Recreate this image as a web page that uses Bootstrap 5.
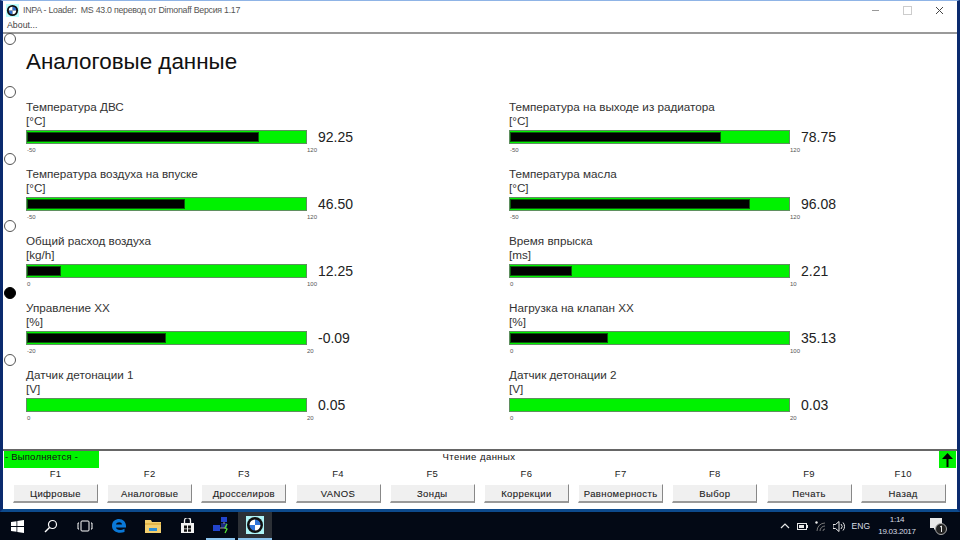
<!DOCTYPE html>
<html lang="ru">
<head>
<meta charset="utf-8">
<title>INPA</title>
<link href="https://cdn.jsdelivr.net/npm/bootstrap@5.3.0/dist/css/bootstrap.min.css" rel="stylesheet">
<style>
html,body{height:540px;overflow:hidden;background:#000}
body{font-family:"Liberation Sans",Arial,sans-serif;color:#222}
.app-win{height:512px;background:#fff;border-top:1px solid #8fb4e6;border-left:3px solid #0a2a6e;border-right:3px solid #0a2a6e;border-bottom:3px solid #0d4a8c;position:relative}
.app-title{height:19px;font-size:8.8px;letter-spacing:-.26px;color:#555;padding-left:3px;gap:4px}
.app-menu{height:12px;font-size:8.8px;color:#444;padding-left:4px;line-height:10px}
.win-ctl{margin-left:auto;gap:23px;padding-right:13px}
.main-pane{border-top:2px solid #9a9a9a;height:419px;padding:15px 0 0 23px;border-bottom:2px solid #666}
.page-head{font-size:22.4px;line-height:26px;color:#111;margin:0 0 25px 0;font-weight:400}
.meter-grid{display:grid;grid-template-columns:483px 340px}
.meter-item{height:67px;font-size:11.7px;line-height:14px;color:#333}
.meter-line{gap:11px;align-items:center;margin-top:1px}
.meter-track{width:281px;height:14px;background:#00f200;border:1px solid #5f8f5f;padding:1px 0}
.meter-fill{height:100%;background:#000;outline:1px solid #0a5a0a;outline-offset:-1px}
.meter-val{font-size:14px;line-height:16px;color:#222}
.meter-scale{width:291px;font-size:6px;line-height:8px;color:#555;margin-top:1px;padding-left:1px}
.scale-end{width:10px;text-align:left}
.radio-dot{position:absolute;left:1px;width:12px;height:12px;border-radius:50%;border:1px solid #555;background:#fff}
.radio-dot.on{background:#000;border-color:#000}
.status-bar{height:17px;font-size:9.5px;letter-spacing:.45px;color:#111}
.status-run{width:95px;background:#00f200;padding-left:1px;line-height:12px;margin-left:1px;letter-spacing:.2px}
.status-mid{flex:1;text-align:center;line-height:12px;padding-right:80px;letter-spacing:.45px}
.status-arrow{width:17px;background:#00f200;margin-right:1px;line-height:0}
.fkey-row{padding-left:10px;gap:9.2px}
.fkey-cell{width:85px;text-align:center}
.fkey-cap{font-size:9.5px;line-height:12px;margin:0 0 4px;color:#222;letter-spacing:.3px}
.fkey-btn{width:85px;height:19px;padding:0;font-size:9.5px;letter-spacing:.4px;line-height:15px;color:#222;-webkit-text-stroke:.1px #222;background:#f0f0f0;border:0;border-radius:0;border-right:1px solid #888;border-bottom:2px solid #999;border-top:1px solid #fff;border-left:1px solid #fff;display:block}
.task-bar{height:28px;background:#030915;position:relative;color:#d8dde4}
.task-left{height:28px}
.task-slot{height:28px;display:flex;align-items:center;justify-content:center;flex:none}
.slot-a{width:34px}
.slot-on{background:#2c3036;border-bottom:2px solid #8cc4ee}
.slot-open{border-bottom:2px solid #8cc4ee;width:29px;margin:0 3px 0 2px}
.tray-zone{position:absolute;right:12px;top:0;height:28px;gap:7px}
.tray-eng{font-size:8.5px}
.tray-clock{font-size:8px;letter-spacing:-.25px;line-height:12px;text-align:center;width:38px;margin-left:1px;margin-right:7px}
</style>
</head>
<body>
<div class="app-win d-flex flex-column">
  <div class="app-title d-flex align-items-center">
    <svg width="13" height="13" viewBox="0 0 14 14"><rect x="0" y="0" width="14" height="14" fill="#bff"/><circle cx="7" cy="7" r="6" fill="#111"/><path d="M7 3a4 4 0 0 1 4 4H7zM7 11a4 4 0 0 1-4-4h4z" fill="#2f6fd0"/><path d="M7 3a4 4 0 0 0-4 4h4zM7 11a4 4 0 0 0 4-4H7z" fill="#fff"/></svg>
    <span>INPA - Loader:&nbsp; MS 43.0 перевод от Dimonaff Версия 1.17</span>
    <div class="win-ctl d-flex align-items-center">
      <svg width="9" height="9" viewBox="0 0 9 9"><path d="M1 4.500h7" stroke="#999" stroke-width="1"/></svg>
      <svg width="9" height="9" viewBox="0 0 9 9"><rect x=".5" y=".5" width="8" height="8" fill="none" stroke="#ccc"/></svg>
      <svg width="9" height="9" viewBox="0 0 9 9"><path d="M1 1l7 7M8 1L1 8" stroke="#444" stroke-width="1"/></svg>
    </div>
  </div>
  <div class="app-menu">About...</div>
  <div class="main-pane">
    <h1 class="page-head">Аналоговые данные</h1>
    <div class="meter-grid">
      <div class="meter-item"><div>Температура ДВС</div><div>[°C]</div><div class="meter-line d-flex"><div class="meter-track"><div class="meter-fill" style="width:83.3%"></div></div><div class="meter-val">92.25</div></div><div class="meter-scale d-flex justify-content-between"><span>-50</span><span class="scale-end">120</span></div></div>
      <div class="meter-item"><div>Температура на выходе из радиатора</div><div>[°C]</div><div class="meter-line d-flex"><div class="meter-track"><div class="meter-fill" style="width:75.6%"></div></div><div class="meter-val">78.75</div></div><div class="meter-scale d-flex justify-content-between"><span>-50</span><span class="scale-end">120</span></div></div>
      <div class="meter-item"><div>Температура воздуха на впуске</div><div>[°C]</div><div class="meter-line d-flex"><div class="meter-track"><div class="meter-fill" style="width:56.6%"></div></div><div class="meter-val">46.50</div></div><div class="meter-scale d-flex justify-content-between"><span>-50</span><span class="scale-end">120</span></div></div>
      <div class="meter-item"><div>Температура масла</div><div>[°C]</div><div class="meter-line d-flex"><div class="meter-track"><div class="meter-fill" style="width:86%"></div></div><div class="meter-val">96.08</div></div><div class="meter-scale d-flex justify-content-between"><span>-50</span><span class="scale-end">120</span></div></div>
      <div class="meter-item"><div>Общий расход воздуха</div><div>[kg/h]</div><div class="meter-line d-flex"><div class="meter-track"><div class="meter-fill" style="width:12.1%"></div></div><div class="meter-val">12.25</div></div><div class="meter-scale d-flex justify-content-between"><span>0</span><span class="scale-end">100</span></div></div>
      <div class="meter-item"><div>Время впрыска</div><div>[ms]</div><div class="meter-line d-flex"><div class="meter-track"><div class="meter-fill" style="width:22.1%"></div></div><div class="meter-val">2.21</div></div><div class="meter-scale d-flex justify-content-between"><span>0</span><span class="scale-end">10</span></div></div>
      <div class="meter-item"><div>Управление ХХ</div><div>[%]</div><div class="meter-line d-flex"><div class="meter-track"><div class="meter-fill" style="width:49.7%"></div></div><div class="meter-val">-0.09</div></div><div class="meter-scale d-flex justify-content-between"><span>-20</span><span class="scale-end">20</span></div></div>
      <div class="meter-item"><div>Нагрузка на клапан ХХ</div><div>[%]</div><div class="meter-line d-flex"><div class="meter-track"><div class="meter-fill" style="width:35.1%"></div></div><div class="meter-val">35.13</div></div><div class="meter-scale d-flex justify-content-between"><span>0</span><span class="scale-end">100</span></div></div>
      <div class="meter-item"><div>Датчик детонации 1</div><div>[V]</div><div class="meter-line d-flex"><div class="meter-track"><div class="meter-fill" style="width:0"></div></div><div class="meter-val">0.05</div></div><div class="meter-scale d-flex justify-content-between"><span>0</span><span class="scale-end">20</span></div></div>
      <div class="meter-item"><div>Датчик детонации 2</div><div>[V]</div><div class="meter-line d-flex"><div class="meter-track"><div class="meter-fill" style="width:0"></div></div><div class="meter-val">0.03</div></div><div class="meter-scale d-flex justify-content-between"><span>0</span><span class="scale-end">20</span></div></div>
    </div>
  </div>
  <div class="status-bar d-flex">
    <div class="status-run">- Выполняется -</div>
    <div class="status-mid">Чтение данных</div>
    <div class="status-arrow"><svg width="17" height="17" viewBox="0 0 17 17"><path d="M8.500 16V4" stroke="#000" stroke-width="2"/><path d="M3 8l5.500-6L14 8z" fill="#000"/></svg></div>
  </div>
  <div class="fkey-row d-flex">
    <div class="fkey-cell"><p class="fkey-cap">F1</p><button class="fkey-btn" type="button">Цифровые</button></div>
    <div class="fkey-cell"><p class="fkey-cap">F2</p><button class="fkey-btn" type="button">Аналоговые</button></div>
    <div class="fkey-cell"><p class="fkey-cap">F3</p><button class="fkey-btn" type="button">Дросселиров</button></div>
    <div class="fkey-cell"><p class="fkey-cap">F4</p><button class="fkey-btn" type="button">VANOS</button></div>
    <div class="fkey-cell"><p class="fkey-cap">F5</p><button class="fkey-btn" type="button">Зонды</button></div>
    <div class="fkey-cell"><p class="fkey-cap">F6</p><button class="fkey-btn" type="button">Коррекции</button></div>
    <div class="fkey-cell"><p class="fkey-cap">F7</p><button class="fkey-btn" type="button">Равномерность</button></div>
    <div class="fkey-cell"><p class="fkey-cap">F8</p><button class="fkey-btn" type="button">Выбор</button></div>
    <div class="fkey-cell"><p class="fkey-cap">F9</p><button class="fkey-btn" type="button">Печать</button></div>
    <div class="fkey-cell"><p class="fkey-cap">F10</p><button class="fkey-btn" type="button">Назад</button></div>
  </div>
  <span class="radio-dot" style="top:32px"></span>
  <span class="radio-dot" style="top:85px"></span>
  <span class="radio-dot" style="top:152px"></span>
  <span class="radio-dot" style="top:219px"></span>
  <span class="radio-dot on" style="top:286px"></span>
  <span class="radio-dot" style="top:353px"></span>
</div>
<div class="task-bar">
  <div class="task-left d-flex">
    <div class="task-slot slot-a"><svg width="13" height="13" viewBox="0 0 13 13"><path d="M0 2l5.500-.8V6H0zM6.300 1.100L13 0v6H6.300zM0 7h5.500v4.800L0 11zM6.300 7H13v6l-6.700-1z" fill="#fff"/></svg></div>
    <div class="task-slot slot-a"><svg width="14" height="14" viewBox="0 0 14 14"><circle cx="8.500" cy="5.500" r="4" fill="none" stroke="#fff" stroke-width="1.200"/><path d="M5.500 8.500L1 13" stroke="#fff" stroke-width="1.400"/></svg></div>
    <div class="task-slot slot-a"><svg width="16" height="12" viewBox="0 0 16 12"><rect x="4" y="1" width="8" height="10" rx="1" fill="none" stroke="#fff"/><path d="M2 3H1v6h1M14 3h1v6h-1" fill="none" stroke="#fff"/></svg></div>
    <div class="task-slot slot-a"><svg width="16" height="16" viewBox="0 0 16 16"><path d="M1 8C1 3 4.500 1 8 1c4 0 7 3 7 7v1.500H5c.2 2.500 4.500 3.500 8.500 1.200v3.300C8 16 1 14 1 8zm4-1.500h6C11 3.500 5.500 3.500 5 6.500z" fill="#0a78d7"/></svg></div>
    <div class="task-slot slot-a"><svg width="16" height="14" viewBox="0 0 16 14"><path d="M0 1h6l1 2h9v11H0z" fill="#f3cf6e"/><rect x="0" y="4" width="16" height="2" fill="#e3b64a"/><rect x="4" y="9" width="8" height="3" fill="#2d8fd8"/></svg></div>
    <div class="task-slot slot-a"><svg width="15" height="16" viewBox="0 0 15 16"><path d="M1 5h13v10H1z" fill="#f2f2f2"/><path d="M4.500 5V2.500a3 3 0 0 1 6 0V5" fill="none" stroke="#f2f2f2" stroke-width="1.300"/><path d="M4 7.500h3v3H4zM8 7.500h3v3H8zM4 11.300h3v2.500H4zM8 11.300h3v2.500H8z" fill="#111"/></svg></div>
    <div class="task-slot slot-open"><svg width="18" height="18" viewBox="0 0 18 18"><rect x="9" y="1" width="6" height="5" fill="#2244cc"/><rect x="1" y="9" width="7" height="6" fill="#2244cc"/><rect x="9" y="7" width="6" height="5" fill="#1a2a80"/><path d="M8 12h5M12 6v2" stroke="#999"/><path d="M15 8l-2 4 2 1-2 4" stroke="#55dd33" fill="none" stroke-width="1.300"/></svg></div>
    <div class="task-slot slot-on slot-a"><svg width="18" height="18" viewBox="0 0 18 18"><rect width="18" height="18" fill="#aef4f6"/><circle cx="9" cy="9" r="8" fill="#111"/><path d="M9 3.500A5.500 5.500 0 0 1 14.500 9H9zM9 14.500A5.500 5.500 0 0 1 3.500 9H9z" fill="#2f74d8"/><path d="M9 3.500A5.500 5.500 0 0 0 3.500 9H9zM9 14.500A5.500 5.500 0 0 0 14.500 9H9z" fill="#fff"/></svg></div>
  </div>
  <div class="tray-zone d-flex align-items-center">
    <svg width="10" height="6" viewBox="0 0 10 6"><path d="M1 5l4-4 4 4" fill="none" stroke="#e8e8e8" stroke-width="1.200"/></svg>
    <svg width="11" height="7" viewBox="0 0 11 7"><rect x=".5" y=".5" width="9" height="6" fill="none" stroke="#e8e8e8"/><rect x="2" y="2" width="5" height="3" fill="#e8e8e8"/><rect x="10" y="2" width="1" height="3" fill="#e8e8e8"/></svg>
    <svg width="11" height="11" viewBox="0 0 11 11"><circle cx="1.500" cy="1.500" r="1.200" fill="#eee"/><path d="M2 10a8 8 0 0 1 8-8M5 10a5 5 0 0 1 5-5M8 10a2 2 0 0 1 2-2" fill="none" stroke="#777"/></svg>
    <svg width="12" height="11" viewBox="0 0 12 11"><path d="M0 3.500h2.500L6 .5v10l-3.500-3H0z" fill="none" stroke="#e8e8e8"/><path d="M8 3a3.500 3.500 0 0 1 0 5M10 1.500a6 6 0 0 1 0 8" fill="none" stroke="#e8e8e8"/></svg>
    <span class="tray-eng">ENG</span>
    <div class="tray-clock"><div>1:14</div><div>19.03.2017</div></div>
    <svg width="18" height="18" viewBox="0 0 18 18"><path d="M0 1h12v10H6l-2 2v-2H0z" fill="#e8e8e8"/><circle cx="11" cy="12" r="5.500" fill="#222" stroke="#aaa"/><path d="M10 10l1.500-1v6" stroke="#eee" fill="none"/></svg>
  </div>
</div>
</body>
</html>
